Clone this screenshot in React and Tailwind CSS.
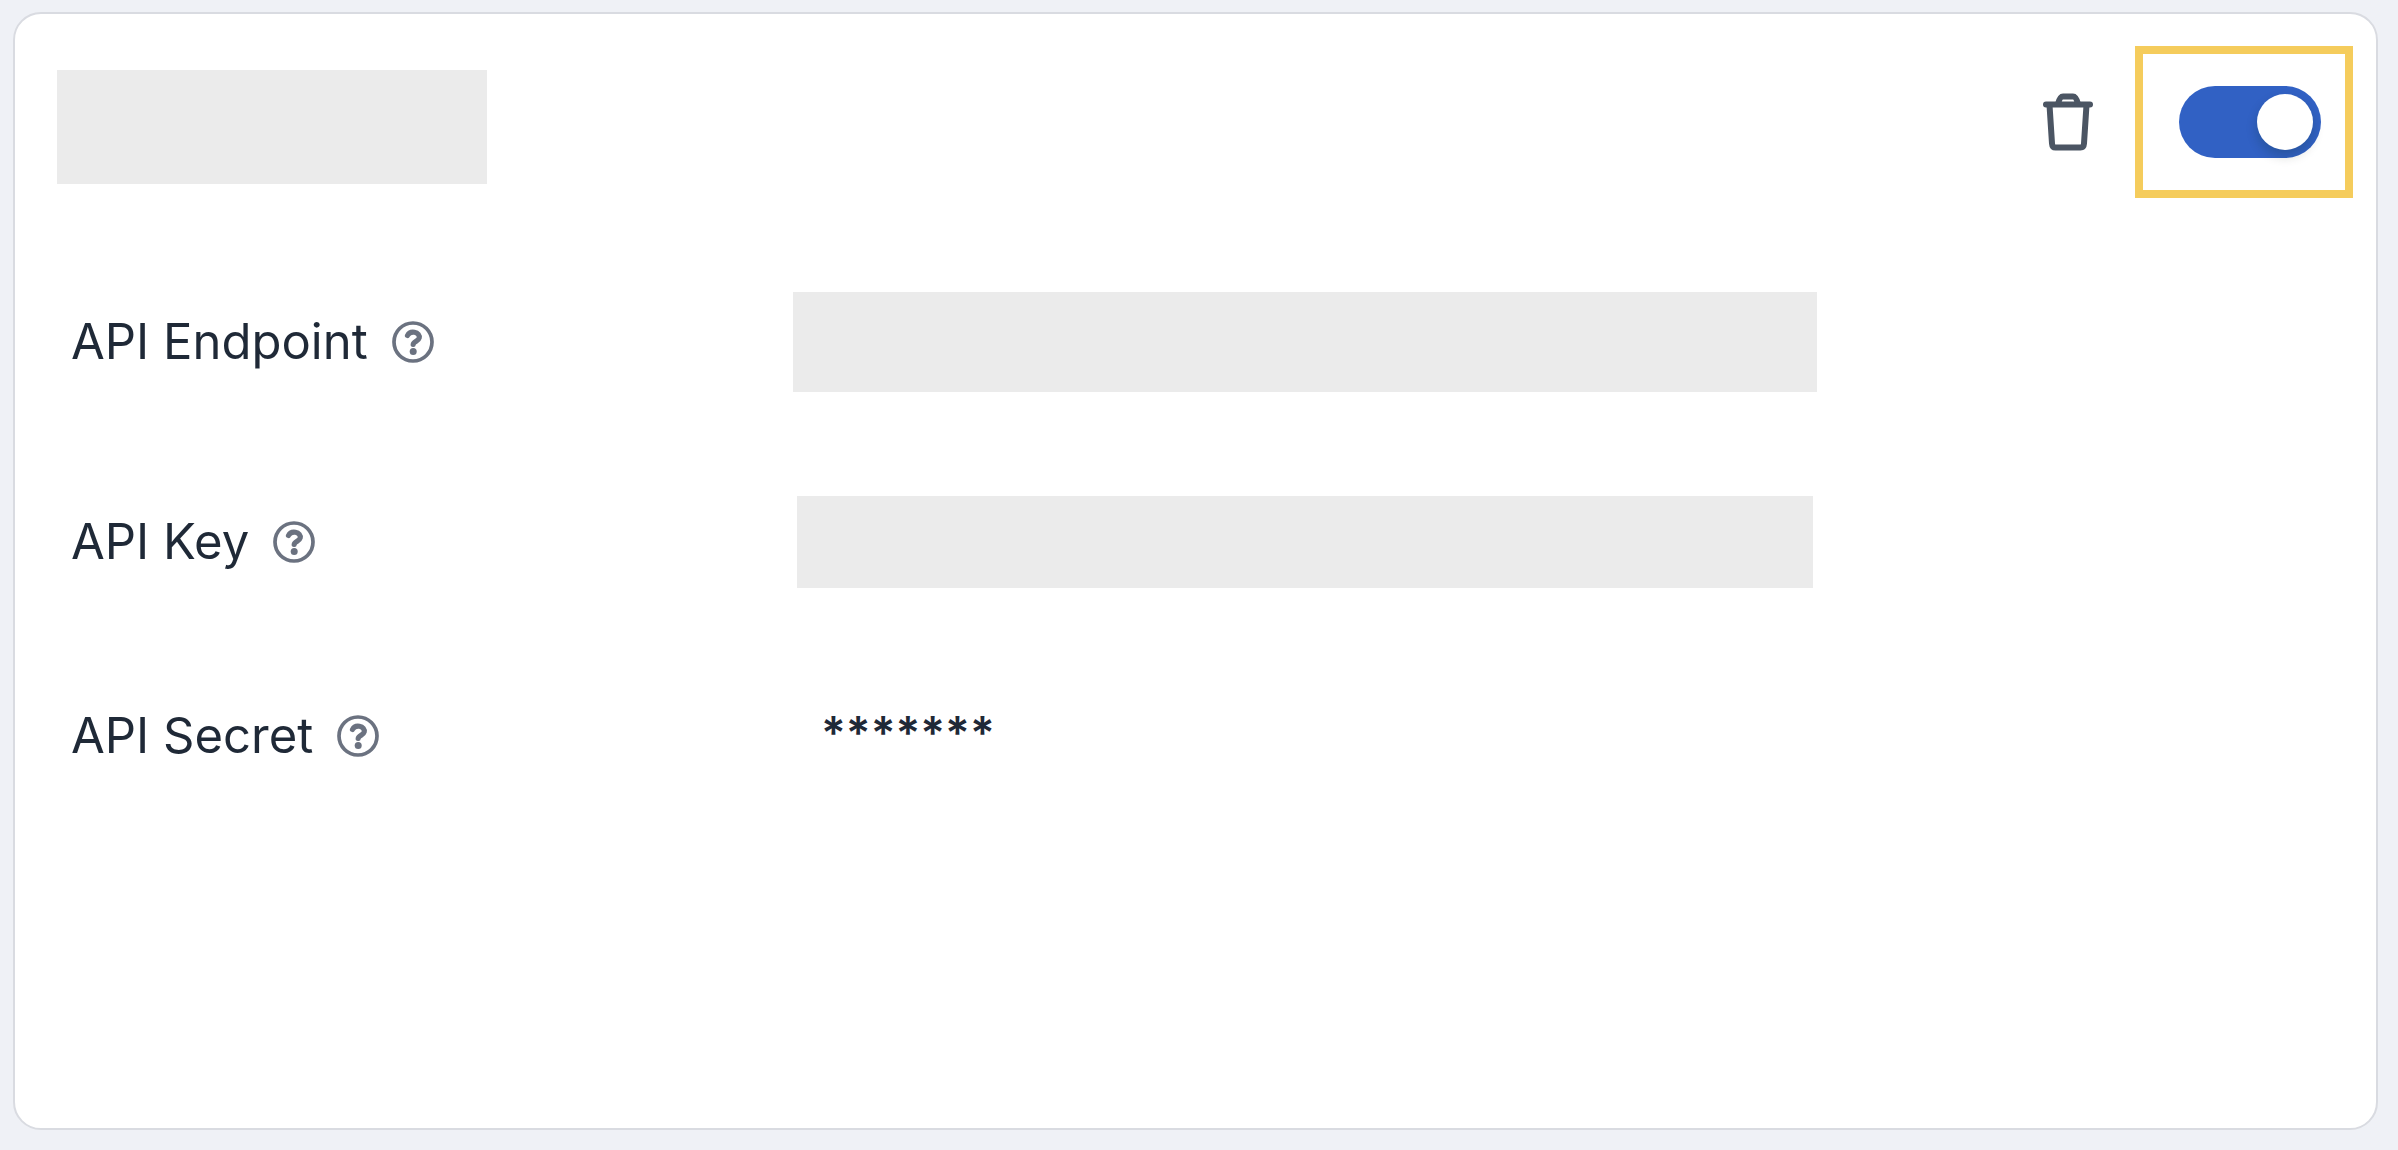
import { useState } from "react";

const fields = [
  { id: "endpoint", label: "API Endpoint" },
  { id: "key", label: "API Key" },
  { id: "secret", label: "API Secret" },
];

function TrashIcon() {
  return (
    <svg viewBox="0 0 50 58" className="h-[58px] w-[50px]" fill="none" stroke="#4b5563" strokeWidth="6" strokeLinecap="round" strokeLinejoin="round" aria-hidden="true">
      <path d="M3 11.500H47" />
      <path d="M15 11C16 7 17.500 3.500 20 3.500H30C32.500 3.500 34 7 35 11" />
      <path d="M6.500 12L9 50.500Q9.300 54.500 12.500 54.500H37.500Q40.700 54.500 41 50.500L43.500 12" />
    </svg>
  );
}

function HelpIcon() {
  return (
    <svg viewBox="0 0 42 42" className="h-[42px] w-[42px]" fill="none" stroke="#6b7280" strokeLinecap="round" strokeLinejoin="round" aria-hidden="true">
      <circle cx="21" cy="21" r="19" strokeWidth="3.700" />
      <path d="M15.500 14.500C17 11.300 20 10.800 22.500 11.200C25.800 11.800 27.800 14.200 27.200 17C26.500 20.200 21.500 20.300 21.200 23.500" strokeWidth="5.200" />
      <circle cx="21.200" cy="30.500" r="3.500" fill="#6b7280" stroke="none" />
    </svg>
  );
}

function FieldValue({ id }) {
  if (id === "endpoint") return <div className="h-[100px] w-full bg-[#ebebeb]" />;
  if (id === "key") return <div className="mx-1 h-[92px] w-full bg-[#ebebeb]" />;
  return <span className="px-7 pb-1.5 text-[46px] font-semibold">*******</span>;
}

export default function App() {
  const [enabled, setEnabled] = useState(true);

  return (
    <div className="flex min-h-screen flex-col bg-[#eff1f6] pt-3 pr-5 pb-5 pl-[13px] font-['Inter',sans-serif] text-[#1f2937]">
      <section className="flex-1 rounded-[28px] border-2 border-[#d9dbe1] bg-white pr-[23px] pl-[42px]">
        <header className="flex items-start justify-between pt-8">
          <div className="mt-6 h-[114px] w-[430px] bg-[#ebebeb]" />
          <div className="flex items-center gap-[42px]">
            <button type="button" aria-label="Delete" className="cursor-pointer">
              <TrashIcon />
            </button>
            <div className="flex h-[152px] w-[218px] justify-end border-8 border-[#f5cc5c] pt-8 pr-6">
              <label className="h-[72px] w-[142px] cursor-pointer rounded-full bg-[#c4c9d2] p-2 has-checked:bg-[#3161c4]">
                <input type="checkbox" role="switch" aria-label="Enabled" className="peer sr-only" checked={enabled} onChange={(e) => setEnabled(e.target.checked)} />
                <span className="block h-14 w-14 rounded-full bg-white shadow-[0_6px_12px_rgba(0,35,11,0.2)] peer-checked:ml-auto" />
              </label>
            </div>
          </div>
        </header>
        <div className="mt-[94px] flex flex-col gap-[104px]">
          {fields.map((field) => (
            <div key={field.id} className="flex min-h-[88px] items-center">
              <div className="flex w-[736px] shrink-0 items-center gap-6 pl-[14px] text-[49px]">
                <span>{field.label}</span>
                <button type="button" aria-label={`About ${field.label}`} className="cursor-pointer">
                  <HelpIcon />
                </button>
              </div>
              <div className="flex w-full max-w-[1024px] items-center">
                <FieldValue id={field.id} />
              </div>
            </div>
          ))}
        </div>
      </section>
    </div>
  );
}
